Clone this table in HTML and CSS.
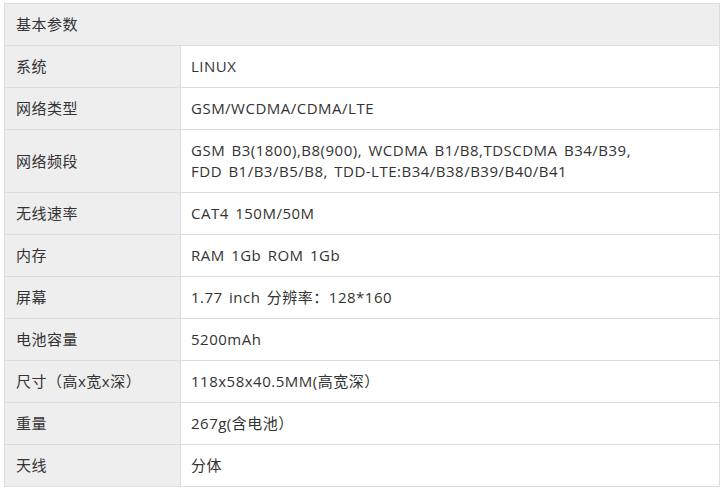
FILE: index.html
```html
<!DOCTYPE html>
<html lang="zh">
<head>
<meta charset="utf-8">
<link rel="stylesheet" href="styles.css">
</head>
<body>
<table class="spec">
  <colgroup><col class="c-key"><col class="c-val"></colgroup>
  <tr><th class="head" colspan="2">基本参数</th></tr>
  <tr><td class="key">系统</td><td class="val">LINUX</td></tr>
  <tr><td class="key">网络类型</td><td class="val">GSM/WCDMA/CDMA/LTE</td></tr>
  <tr><td class="key">网络频段</td><td class="val">GSM B3(1800),B8(900), WCDMA B1/B8,TDSCDMA B34/B39,<br>FDD B1/B3/B5/B8, TDD-LTE:B34/B38/B39/B40/B41</td></tr>
  <tr><td class="key">无线速率</td><td class="val">CAT4 150M/50M</td></tr>
  <tr><td class="key">内存</td><td class="val">RAM 1Gb ROM 1Gb</td></tr>
  <tr><td class="key">屏幕</td><td class="val">1.77 inch 分辨率：128*160</td></tr>
  <tr><td class="key">电池容量</td><td class="val">5200mAh</td></tr>
  <tr><td class="key">尺寸（高x宽x深）</td><td class="val">118x58x40.5MM(高宽深）</td></tr>
  <tr><td class="key">重量</td><td class="val">267g(含电池）</td></tr>
  <tr><td class="key">天线</td><td class="val">分体</td></tr>
</table>
</body>
</html>
```
FILE: styles.css
```css
html, body {
  margin: 0;
  padding: 0;
  background: #ffffff;
}
body {
  padding: 3px 0 0 4px;
  font-family: "Open Sans", "Noto Sans CJK SC", sans-serif;
  font-size: 15px;
  letter-spacing: 0.5px;
  word-spacing: 2px;
  color: #333333;
}
.spec {
  border-collapse: collapse;
  width: 716px;
  table-layout: fixed;
}
.c-key {
  width: 176px;
}
.spec th, .spec td {
  border: 1px solid #dddddd;
  padding: 10px 10px 10px 11px;
  line-height: 21px;
  height: 21px;
  text-align: left;
  font-weight: normal;
  vertical-align: middle;
  white-space: nowrap;
}
.head {
  background: #eeeeee;
}
.key {
  background: #eeeeee;
}
.val {
  background: #ffffff;
}
.spec td.val {
  padding-left: 10px;
}
```
